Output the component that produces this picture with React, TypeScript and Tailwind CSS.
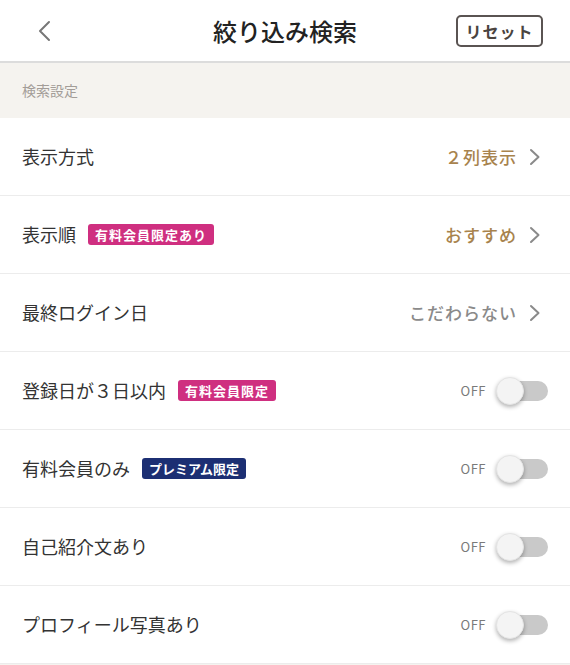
import React from "react";

const font = { fontFamily: '"Noto Sans CJK JP", "Noto Sans", sans-serif' };

function Chevron({ className }: { className?: string }) {
  return (
    <svg width="12" height="18" viewBox="0 0 12 18" className={className} fill="none">
      <path d="M2 2 L9.5 9 L2 16" stroke="#8a8a8a" strokeWidth="2" strokeLinecap="round" strokeLinejoin="round" />
    </svg>
  );
}

function Badge({ text, color }: { text: string; color: "pink" | "navy" }) {
  return (
    <span
      className={
        "ml-3 inline-flex h-[21px] items-center rounded-[3px] px-[7px] text-[13px] font-bold leading-none text-white " +
        (color === "pink" ? "bg-[#cf2f80] tracking-[1px]" : "bg-[#1c2f73]")
      }
    >
      {text}
    </span>
  );
}

function Toggle() {
  return (
    <div className="flex items-center">
      <span className="mr-[10px] text-[13px] tracking-[0.5px] text-[#7a7a7a]">OFF</span>
      <div className="relative h-[28px] w-[52px]">
        <div className="absolute right-0 top-[4px] h-[20px] w-[44px] rounded-full bg-[#c9c9c9]" />
        <div className="absolute left-0 top-0 h-[28px] w-[28px] rounded-full border border-[#e4e4e4] bg-[#f4f4f4] shadow-[0_2px_4px_rgba(0,0,0,0.3)]" />
      </div>
    </div>
  );
}

type Row = {
  label: string;
  badge?: { text: string; color: "pink" | "navy" };
  value?: string;
  valueColor?: string;
  toggle?: boolean;
};

const rows: Row[] = [
  { label: "表示方式", value: "２列表示", valueColor: "text-[#a8834d]" },
  { label: "表示順", badge: { text: "有料会員限定あり", color: "pink" }, value: "おすすめ", valueColor: "text-[#a8834d]" },
  { label: "最終ログイン日", value: "こだわらない", valueColor: "text-[#8a8a8a]" },
  { label: "登録日が３日以内", badge: { text: "有料会員限定", color: "pink" }, toggle: true },
  { label: "有料会員のみ", badge: { text: "プレミアム限定", color: "navy" }, toggle: true },
  { label: "自己紹介文あり", toggle: true },
  { label: "プロフィール写真あり", toggle: true },
];

export default function App() {
  return (
    <div className="min-h-[665px] w-[570px] bg-[#f5f3ef]" style={font}>
      <header className="grid h-[63px] grid-cols-[1fr_auto_1fr] items-center border-b-2 border-[#dcdcdc] bg-white px-[27px]">
        <svg width="16" height="24" viewBox="0 0 16 24" fill="none" className="ml-[9px]">
          <path d="M13 3 L4 12 L13 21" stroke="#777" strokeWidth="2" strokeLinecap="round" strokeLinejoin="round" />
        </svg>
        <h1 className="text-[24px] font-medium text-[#222]">絞り込み検索</h1>
        <div className="flex justify-end">
          <button className="flex h-[32px] w-[87px] items-center justify-center rounded-[5px] border-2 border-[#5a5452] text-[16px] font-bold tracking-[1px] text-[#4a4440]">
            リセット
          </button>
        </div>
      </header>
      <div className="flex h-[55px] items-center pl-[22px] text-[14px] text-[#a39d98]">検索設定</div>
      <div className="bg-white">
        {rows.map((r, i) => (
          <div
            key={i}
            className="flex h-[78px] items-center justify-between border-b border-[#ececec] pl-[22px] pr-[22px]"
          >
            <div className="flex items-center">
              <span className="text-[18px] text-[#333]">{r.label}</span>
              {r.badge && <Badge text={r.badge.text} color={r.badge.color} />}
            </div>
            {r.value && (
              <div className="flex items-center">
                <span className={"text-[17px] font-medium tracking-[1px] " + r.valueColor}>{r.value}</span>
                <Chevron className="ml-[12px] mr-[7px]" />
              </div>
            )}
            {r.toggle && <Toggle />}
          </div>
        ))}
      </div>
    </div>
  );
}
